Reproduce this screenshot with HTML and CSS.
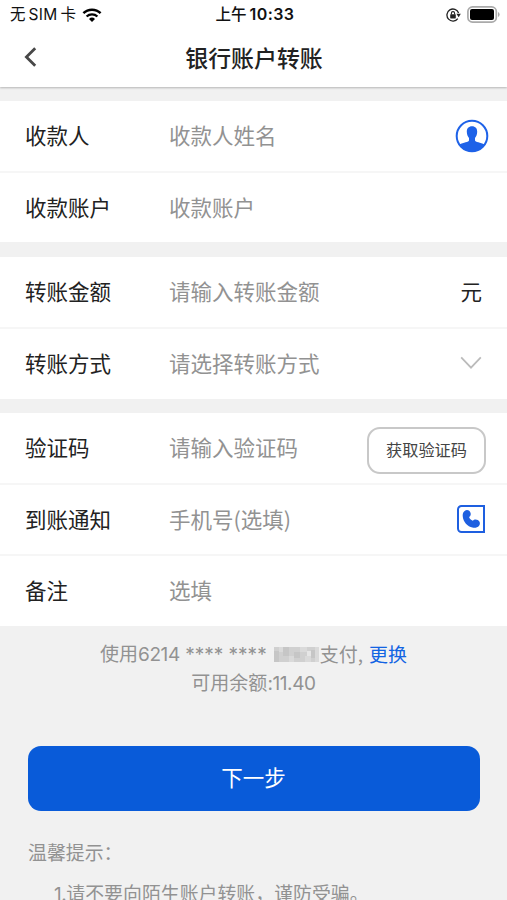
FILE: index.html
```html
<!DOCTYPE html>
<html lang="zh-CN">
<head>
    <meta charset="UTF-8">
    <meta name="viewport" content="width=device-width, initial-scale=1.0">
    <title>银行账户转账</title>
    <link rel="stylesheet" href="styles.css">
</head>
<body>
    <!-- Header -->
    <header class="header">
        <div class="status-bar">
            <div class="status-left">
                <span class="carrier"><span>无</span><span class="sim">SIM</span><span>卡</span></span>
                <svg class="wifi" viewBox="0 0 20 14" width="20" height="14">
                    <path d="M1.4 5.2a12.4 12.4 0 0 1 17.2 0" fill="none" stroke="#000" stroke-width="2.5"/>
                    <path d="M4.6 8.5a7.8 7.8 0 0 1 10.8 0" fill="none" stroke="#000" stroke-width="2.3"/>
                    <path d="M10 14l-3-3a4.3 4.3 0 0 1 6 0z"/>
                </svg>
            </div>
            <div class="clock">上午<span>10:33</span></div>
            <div class="status-right">
                <svg viewBox="0 0 16 14" width="16" height="14">
                    <path d="M12.6 5A6 6 0 1 0 11.8 10.6" fill="none" stroke="#222" stroke-width="1.3"/>
                    <path d="M10.4 5.8h4.4l-2.1 3.4z" fill="#222"/>
                    <rect x="4.2" y="6.2" width="5.6" height="4.2" rx=".6" fill="#222"/>
                    <path d="M5.4 6.5V5.2a1.6 1.6 0 0 1 3.2 0v1.3" fill="none" stroke="#222" stroke-width="1.1"/>
                </svg>
                <svg viewBox="0 0 33 17" width="33" height="17">
                    <rect x=".9" y=".9" width="28.4" height="15.2" rx="4.6" fill="#fff" stroke="#aaa" stroke-width="1.7"/>
                    <rect x="3" y="3" width="24" height="11" rx="2"/>
                    <path d="M31 6v5q1.6-.8 1.6-2.5T31 6z" fill="#aaa"/>
                </svg>
            </div>
        </div>
        <div class="nav-bar">
            <svg class="back" viewBox="0 0 14 20" width="14" height="20">
                <path d="M11.2 1.2L2.4 10l8.8 8.8" fill="none" stroke="#484848" stroke-width="2.8"/>
            </svg>
            <h1>银行账户转账</h1>
        </div>
    </header>

    <!-- Transfer Form -->
    <form id="transferForm">
        <div class="form-section">
            <div class="form-row">
                <label for="payee">收款人</label>
                <input type="text" id="payee" placeholder="收款人姓名">
                <svg class="contact-icon" viewBox="0 0 34 34" width="34" height="34">
                    <circle cx="17" cy="17" r="15.3" fill="#fff" stroke="#1e62e8" stroke-width="2"/>
                    <path d="M17 7.2c3.4 0 5.3 2.2 5.2 5.6-.1 2.9-1 4.8-2.2 6.2v2.3c0 1.9 5.8 2.2 9.5 4.3A15 15 0 0 1 17 32.4 15 15 0 0 1 4.5 25.6c3.7-2.1 9.5-2.4 9.5-4.3V19c-1.2-1.4-2.1-3.3-2.2-6.2-.1-3.4 1.8-5.6 5.2-5.6z" fill="#1e62e8"/>
                </svg>
            </div>
            <div class="form-row">
                <label for="account">收款账户</label>
                <input type="text" id="account" placeholder="收款账户">
            </div>
        </div>

        <div class="form-section">
            <div class="form-row">
                <label for="amount">转账金额</label>
                <input type="text" id="amount" placeholder="请输入转账金额">
                <span class="unit">元</span>
            </div>
            <div class="form-row">
                <label for="method">转账方式</label>
                <input type="text" id="method" placeholder="请选择转账方式" readonly>
                <svg class="arrow" viewBox="0 0 22 14" width="22" height="14">
                    <path d="M1.2 1.4L11 11.6l9.8-10.2" fill="none" stroke="#bbb" stroke-width="1.8"/>
                </svg>
            </div>
        </div>

        <div class="form-section">
            <div class="form-row">
                <label for="code">验证码</label>
                <input type="text" id="code" placeholder="请输入验证码">
                <button type="button" class="code-btn">获取验证码</button>
            </div>
            <div class="form-row">
                <label for="phone">到账通知</label>
                <input type="text" id="phone" placeholder="手机号(选填)">
                <svg class="phone-icon" viewBox="0 0 28 28" width="28" height="28">
                    <path d="M4.5 1H27v26H4.5A3.5 3.5 0 0 1 1 23.5v-19A3.5 3.5 0 0 1 4.5 1z" fill="#fff" stroke="#1e5fe0" stroke-width="2"/>
                    <path d="M7.6 6c2-1.6 4.6-1 5.7 1.2 1 2.2.3 3.8-1.2 4.9.5 1.8 1.8 3.1 3.7 3.6 1.2-1.4 3.2-1.8 5.1-.6 2.2 1.4 2.7 3.8 1.2 5.6-1.5 1.8-3.9 2.4-6.7 1.9C10.6 21.7 6.1 16.9 5.7 11c-.1-2.1.4-3.9 1.9-5z" fill="#1e5fe0"/>
                </svg>
            </div>
            <div class="form-row">
                <label for="remark">备注</label>
                <input type="text" id="remark" placeholder="选填">
            </div>
        </div>

        <div class="pay-info">
            <div class="pay-card">
                <span>使用<span class="digits">6214</span><span class="stars"> **** ****</span></span>
                <svg class="mosaic" viewBox="0 0 45 15" width="45" height="15">
                    <path d="M0 0h45v15H0z" fill="#d0d0d0"/>
                    <path d="M0 4h5v11H0zM9 0h6v9H9zM20 5h6v6h-6zM37 3h4v8h-4z" fill="#c6c6c6"/>
                    <path d="M5 0h4v5H5zM15 9h5v6h-5zM26 0h7v5h-7zM31 9h6v6h-6zM41 0h4v15h-4z" fill="#dadada"/>
                    <path d="M33 4h4v5h-4z" fill="#e6e6e6"/>
                </svg>
                <span>支付,</span>
                <a class="change" href="#">更换</a>
            </div>
            <div class="balance">可用余额<span class="digits">:11.40</span></div>
        </div>

        <button type="submit" class="next-btn">下一步</button>
    </form>

    <!-- Tips -->
    <div class="tips">
        <p>温馨提示：</p>
        <p class="tip-item"><span class="digits">1.</span>请不要向陌生账户转账，谨防受骗。</p>
    </div>
</body>
</html>
```
FILE: styles.css
```css
body {
    margin: 0;
    height: 900px;
    overflow: hidden;
    background-color: #f1f1f1;
    color: #222;
    font-family: "Noto Sans CJK SC", sans-serif;
}

input, button {
    font-family: inherit;
}

svg {
    display: block;
    flex-shrink: 0;
}

.header {
    height: 87px;
    background-color: white;
    box-shadow: 0 1px 2px rgba(0, 0, 0, 0.25);
}

.status-bar {
    display: grid;
    grid-template-columns: 1fr auto 1fr;
    align-items: center;
    height: 29px;
    padding: 0 7px 0 10px;
    font-size: 15.5px;
    line-height: 29px;
    color: #111;
}

.status-left, .status-right {
    display: flex;
    align-items: center;
}

.status-left {
    gap: 6px;
}

.status-right {
    justify-content: flex-end;
    gap: 5px;
}

.carrier {
    display: flex;
    gap: 3px;
    font-family: Inter, "Noto Sans CJK SC", sans-serif;
}

.sim {
    letter-spacing: 0.3px;
}

.clock {
    font-family: Inter, "Noto Sans CJK SC", sans-serif;
    font-weight: 500;
}

.clock span {
    margin-left: 3px;
    font-weight: 600;
    font-size: 16px;
    letter-spacing: 0.4px;
}

.nav-bar {
    display: grid;
    grid-template-columns: 1fr auto 1fr;
    align-items: center;
    height: 56px;
    padding: 0 23px 0 24px;
}

h1 {
    margin: 0;
    font-size: 22.9px;
    font-weight: 500;
    line-height: 54px;
}

.form-section {
    margin-top: 14px;
    padding-bottom: 1px;
    background-color: white;
}

.form-section:nth-child(2) {
    margin-top: 15px;
}

.form-section:first-child {
    padding-bottom: 0;
}

.form-row {
    display: flex;
    align-items: center;
    box-sizing: border-box;
    height: 70px;
    padding: 0 18px 0 25px;
}

.form-row + .form-row {
    height: 71px;
    border-top: 2px solid #f6f6f6;
}

label {
    width: 144px;
    padding-bottom: 3px;
    font-size: 21.5px;
}

input {
    flex: 1;
    min-width: 0;
    padding: 0 0 3px;
    border: none;
    outline: none;
    background: none;
    font-size: 21.5px;
    color: #222;
}

input::placeholder {
    color: #929292;
    opacity: 1;
}

.unit {
    margin-right: 7px;
    padding-bottom: 4px;
    font-size: 21.5px;
}

.arrow {
    margin: 0 7px 2px 0;
}

.code-btn {
    width: 119px;
    height: 47px;
    margin: 5px 3px 0 0;
    padding: 0 0 3px;
    border: 2px solid #c8c8c8;
    border-radius: 13px;
    background-color: white;
    color: #444;
    font-size: 16.2px;
}

.phone-icon {
    margin: 0 4px 1px 0;
}

.digits, .stars {
    font-family: Inter, "Noto Sans CJK SC", sans-serif;
}

.digits {
    letter-spacing: -0.4px;
}

.pay-info {
    padding-top: 14px;
    color: #929292;
    font-size: 19px;
    line-height: 28px;
    text-align: center;
}

.pay-card, .balance {
    height: 28px;
}

.pay-card {
    display: flex;
    justify-content: center;
    align-items: center;
}

.mosaic {
    margin: 0 1px 0 7px;
}

.change {
    margin-left: 6px;
    color: #1264e3;
    text-decoration: none;
}

.next-btn {
    display: block;
    width: 452px;
    height: 65px;
    margin: 50px auto 0;
    padding: 0 0 5px;
    border: none;
    border-radius: 13px;
    background-color: #095bd9;
    color: white;
    font-size: 21.5px;
}

.tips {
    padding: 20px 28px 0;
    color: #929292;
    font-size: 18.9px;
    line-height: 41px;
}

.tips p {
    margin: 0;
}

.tips .tip-item {
    padding-left: 26px;
    white-space: nowrap;
}
```
